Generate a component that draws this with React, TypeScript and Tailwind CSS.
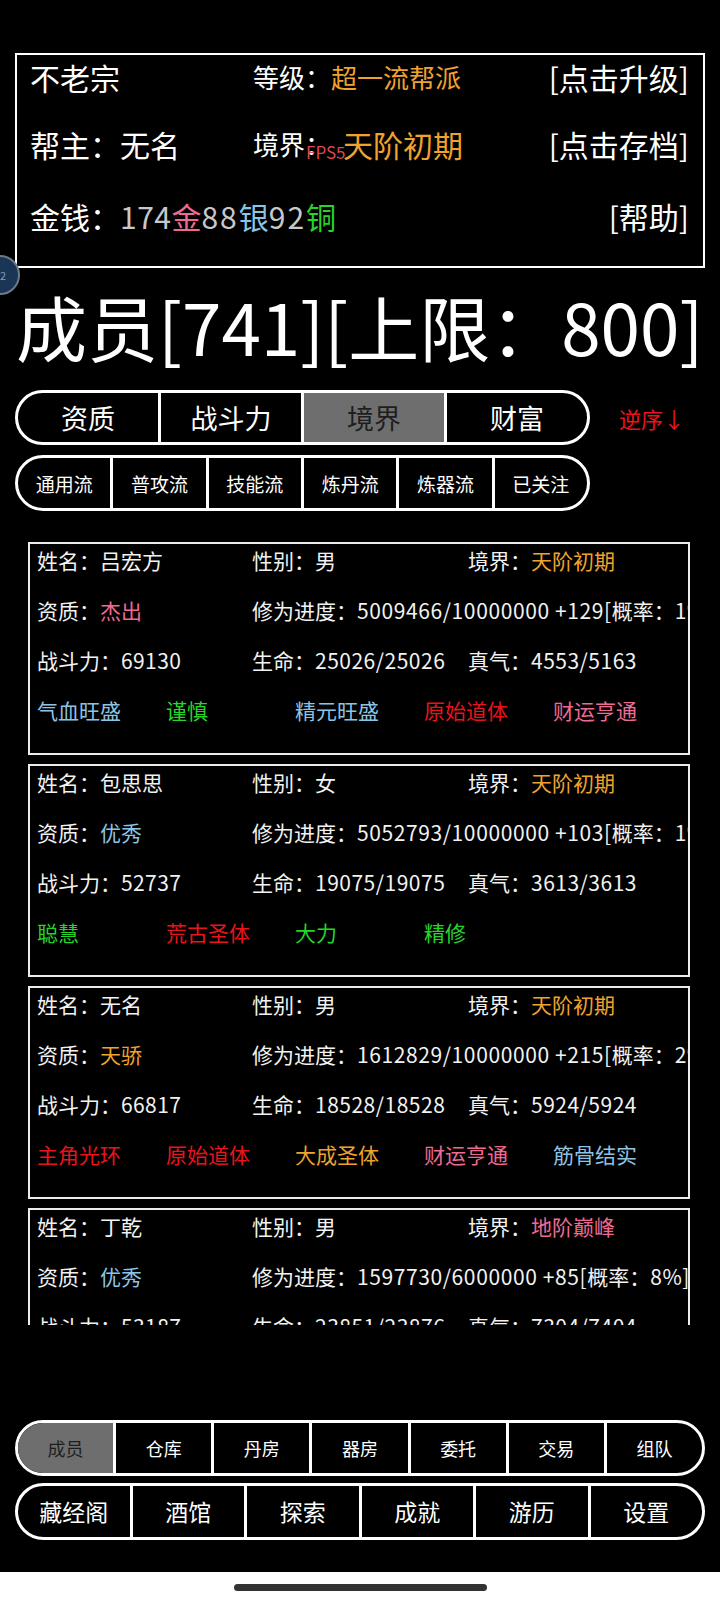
import React from "react";

const ORANGE = "text-[#f0a22e]";
const PINK = "text-[#ee6a92]";
const BLUE = "text-[#8cc4e6]";
const GREEN = "text-[#27d42b]";
const RED = "text-[#e8141c]";

type Trait = { t: string; c: string };
type Member = {
  name: string;
  sex: string;
  realm: string;
  realmC: string;
  apt: string;
  aptC: string;
  prog: string;
  rate: string;
  power: string;
  hp: string;
  qi: string;
  traits: Trait[];
};

const members: Member[] = [
  {
    name: "吕宏方",
    sex: "男",
    realm: "天阶初期",
    realmC: ORANGE,
    apt: "杰出",
    aptC: PINK,
    prog: "5009466/10000000 +129[",
    rate: "1%]",
    power: "69130",
    hp: "25026/25026",
    qi: "4553/5163",
    traits: [
      { t: "气血旺盛", c: BLUE },
      { t: "谨慎", c: GREEN },
      { t: "精元旺盛", c: BLUE },
      { t: "原始道体", c: RED },
      { t: "财运亨通", c: PINK },
    ],
  },
  {
    name: "包思思",
    sex: "女",
    realm: "天阶初期",
    realmC: ORANGE,
    apt: "优秀",
    aptC: BLUE,
    prog: "5052793/10000000 +103[",
    rate: "1%]",
    power: "52737",
    hp: "19075/19075",
    qi: "3613/3613",
    traits: [
      { t: "聪慧", c: GREEN },
      { t: "荒古圣体", c: RED },
      { t: "大力", c: GREEN },
      { t: "精修", c: GREEN },
    ],
  },
  {
    name: "无名",
    sex: "男",
    realm: "天阶初期",
    realmC: ORANGE,
    apt: "天骄",
    aptC: ORANGE,
    prog: "1612829/10000000 +215[",
    rate: "2%]",
    power: "66817",
    hp: "18528/18528",
    qi: "5924/5924",
    traits: [
      { t: "主角光环", c: RED },
      { t: "原始道体", c: RED },
      { t: "大成圣体", c: ORANGE },
      { t: "财运亨通", c: PINK },
      { t: "筋骨结实", c: BLUE },
    ],
  },
  {
    name: "丁乾",
    sex: "男",
    realm: "地阶巅峰",
    realmC: PINK,
    apt: "优秀",
    aptC: BLUE,
    prog: "1597730/6000000 +85[",
    rate: "8%]",
    power: "53187",
    hp: "23851/23876",
    qi: "7304/7404",
    traits: [],
  },
];

function Pill({
  items,
  active,
  widthClass,
  textClass,
}: {
  items: string[];
  active: number;
  widthClass: string;
  textClass: string;
}) {
  return (
    <div
      className={`flex h-full ${widthClass} rounded-full border-[3px] border-white overflow-hidden ${textClass}`}
    >
      {items.map((t, i) => (
        <div
          key={t}
          className={`flex-1 flex items-center justify-center leading-none ${
            i > 0 ? "border-l-[3px] border-white" : ""
          } ${i === active ? "bg-[#6e6e6e] text-[#1e1e1e]" : "text-white"}`}
        >
          {t}
        </div>
      ))}
    </div>
  );
}

function Card({ m }: { m: Member }) {
  return (
    <div className="h-[213px] shrink-0 border-2 border-[#ececec] overflow-hidden pl-[7px] flex flex-col gap-[14px] text-[21px] text-[#f2f2f2] whitespace-nowrap">
      <div className="-mt-[2px] h-[36px] flex items-center leading-none shrink-0">
        <span className="w-[215px] shrink-0">姓名：{m.name}</span>
        <span className="w-[216px] shrink-0">性别：{m.sex}</span>
        <span className="shrink-0">
          境界：<span className={m.realmC}>{m.realm}</span>
        </span>
      </div>
      <div className="h-[36px] flex items-center leading-none shrink-0">
        <span className="w-[215px] shrink-0">
          资质：<span className={m.aptC}>{m.apt}</span>
        </span>
        <span className="shrink-0">
          修为进度：<span className="tracking-[0.6px]">{m.prog}</span>概率：
          <span className="tracking-[0.6px]">{m.rate}</span>
        </span>
      </div>
      <div className="h-[36px] flex items-center leading-none shrink-0">
        <span className="w-[215px] shrink-0">
          战斗力：<span className="tracking-[0.4px]">{m.power}</span>
        </span>
        <span className="w-[216px] shrink-0">
          生命：<span className="tracking-[0.5px]">{m.hp}</span>
        </span>
        <span className="shrink-0">
          真气：<span className="tracking-[0.5px]">{m.qi}</span>
        </span>
      </div>
      <div className="h-[36px] flex items-center leading-none shrink-0">
        {m.traits.map((tr, i) => (
          <span key={i} className={`w-[129px] shrink-0 ${tr.c}`}>
            {tr.t}
          </span>
        ))}
      </div>
    </div>
  );
}

export default function App() {
  return (
    <div className="relative w-[720px] h-[1600px] bg-black overflow-hidden flex flex-col font-['Noto_Sans_CJK_SC',sans-serif] text-white">
      {/* top info box */}
      <div className="ml-[15px] mt-[53px] w-[690px] h-[215px] shrink-0 border-2 border-white flex flex-col">
        <div className="-mt-[3px] h-[50px] flex items-center pl-[13px] pr-[14px] leading-none">
          <div className="w-[223px] text-[30px]">不老宗</div>
          <div className="flex-1 text-[26px]">
            等级：<span className={ORANGE}>超一流帮派</span>
          </div>
          <div className="text-[30px]">[点击升级]</div>
        </div>
        <div className="mt-[17px] h-[50px] flex items-center pl-[13px] pr-[14px] leading-none">
          <div className="w-[223px] text-[30px]">帮主：无名</div>
          <div className="flex-1 flex items-center text-[26px]">
            <span>境界：</span>
            <span className={`${ORANGE} text-[30px] ml-[12px]`}>天阶初期</span>
          </div>
          <div className="text-[30px]">[点击存档]</div>
        </div>
        <div className="mt-[22px] h-[50px] flex items-center pl-[13px] pr-[14px] leading-none">
          <div className="flex-1 text-[30px]">
            金钱：<span className="text-[#c8c8c8] tracking-[0.5px]">174</span>
            <span className={PINK}>金</span>
            <span className="text-[#c8c8c8] tracking-[2px]">88</span>
            <span className={BLUE}>银</span>
            <span className="text-[#c8c8c8] tracking-[2px]">92</span>
            <span className={GREEN}>铜</span>
          </div>
          <div className="text-[30px]">[帮助]</div>
        </div>
      </div>

      {/* header */}
      <div className="h-[122px] shrink-0 flex items-center pl-[16px] pb-[8px] text-[71px] leading-none">
        成员[741][上限：800]
      </div>

      {/* sort row */}
      <div className="h-[55px] shrink-0 flex items-center">
        <div className="ml-[15px] h-full">
          <Pill
            items={["资质", "战斗力", "境界", "财富"]}
            active={2}
            widthClass="w-[575px]"
            textClass="text-[27px]"
          />
        </div>
        <div className="ml-[29px] text-[22px] text-[#e8141c] leading-none">逆序↓</div>
      </div>

      {/* filter row */}
      <div className="mt-[10px] h-[56px] shrink-0 flex items-center">
        <div className="ml-[15px] h-full">
          <Pill
            items={["通用流", "普攻流", "技能流", "炼丹流", "炼器流", "已关注"]}
            active={-1}
            widthClass="w-[575px]"
            textClass="text-[19px]"
          />
        </div>
      </div>

      {/* members list */}
      <div className="mt-[31px] ml-[28px] w-[662px] h-[783px] shrink-0 overflow-hidden flex flex-col gap-[9px]">
        {members.map((m, i) => (
          <Card key={i} m={m} />
        ))}
      </div>

      {/* bottom nav */}
      <div className="mt-[95px] ml-[15px] h-[56px] shrink-0">
        <Pill
          items={["成员", "仓库", "丹房", "器房", "委托", "交易", "组队"]}
          active={0}
          widthClass="w-[690px]"
          textClass="text-[18px]"
        />
      </div>
      <div className="mt-[7px] ml-[15px] h-[57px] shrink-0">
        <Pill
          items={["藏经阁", "酒馆", "探索", "成就", "游历", "设置"]}
          active={-1}
          widthClass="w-[690px]"
          textClass="text-[23px]"
        />
      </div>

      {/* system bar */}
      <div className="mt-auto h-[28px] shrink-0 bg-white flex items-center justify-center">
        <div className="w-[253px] h-[7px] rounded-full bg-[#333333] mt-[2px]" />
      </div>

      {/* overlays */}
      <div className="absolute left-[306px] top-[143px] text-[17px] leading-none text-[#d9484f]">
        FPS5
      </div>
      <div className="absolute left-[-20px] top-[255px] w-[40px] h-[40px] rounded-full bg-[#1b3556] border-2 border-[#6c7a8a] flex items-center justify-center text-[11px] text-[#8a9ab0] leading-none">
        22
      </div>
    </div>
  );
}
